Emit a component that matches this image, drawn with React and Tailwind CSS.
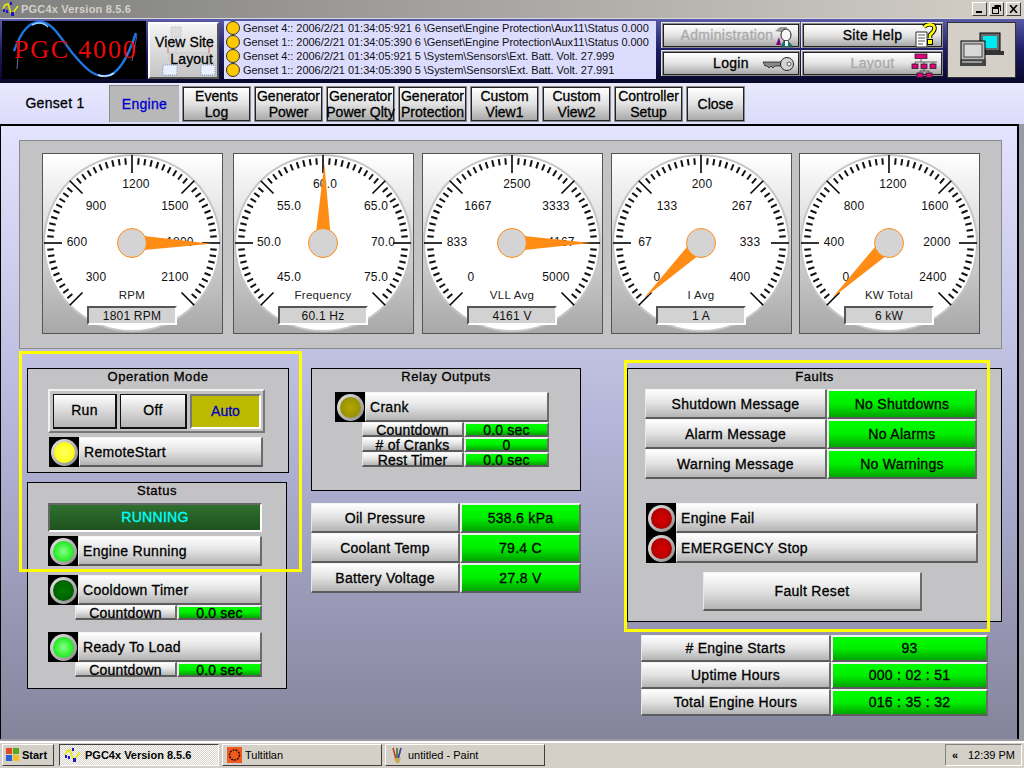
import React from "react";

const strokeTxt = "[-webkit-text-stroke:0.3px_#000]";
const raised = "bg-gradient-to-b from-white via-[#e2e2e2] to-[#b4b4b4] border-t border-l border-t-[#f4f4f4] border-l-[#e8e8e8] border-r-2 border-b-2 border-r-[#6a6a6a] border-b-[#5c5c5c]";
const greenCell = "bg-gradient-to-b from-[#00ff00] via-[#00ee00] to-[#00a400] border-2 border-t-[#f0f0f0] border-l-[#f0f0f0] border-r-[#6a6a6a] border-b-[#5c5c5c]";

function Row({ label, value, labelW, valueW, h, size }) {
  const text = size === "small" ? "text-[14px] leading-none tracking-[0.2px]" : "text-[14px] tracking-[0.3px]";
  return (
    <div className={`flex text-black ${strokeTxt} ${text}`} style={{ height: h }}>
      <div className={`${raised} flex items-center justify-center shrink-0 pt-px`} style={{ width: labelW }}>{label}</div>
      <div className={`${greenCell} flex items-center justify-center shrink-0`} style={{ width: valueW }}>{value}</div>
    </div>
  );
}

const ledColors = {
  yellow: "bg-[radial-gradient(circle,#ffff66_0%,#ffff22_55%,#e8e800_100%)]",
  green: "bg-[radial-gradient(circle,#88ff88_0%,#33f033_55%,#10c010_100%)]",
  dark: "bg-[radial-gradient(circle,#007a00_0%,#006000_70%,#005000_100%)]",
  olive: "bg-[radial-gradient(circle,#b0a800_0%,#989000_70%,#807800_100%)]",
  red: "bg-[radial-gradient(circle,#d80000_0%,#b80000_60%,#880000_100%)]",
};

function Led({ color }) {
  return (
    <div className="w-[30px] h-full bg-black flex items-center justify-center shrink-0">
      <div className="w-[27px] h-[27px] rounded-full bg-gradient-to-br from-[#e8e8e8] to-[#8a8a8a] flex items-center justify-center">
        <div className={`w-[21px] h-[21px] rounded-full ${ledColors[color]}`} />
      </div>
    </div>
  );
}

function Indicator({ color, label, w = 214, h = 30 }) {
  return (
    <div className="flex" style={{ width: w, height: h }}>
      <Led color={color} />
      <div className={`${raised} flex-1 flex items-center pl-[4px] pt-px text-[14px] tracking-[0.3px] text-black ${strokeTxt}`}>{label}</div>
    </div>
  );
}

function PanelTitle({ children }) {
  return <div className={`h-[20px] pt-px text-center text-[13px] leading-[14px] tracking-[0.55px] text-black ${strokeTxt}`}>{children}</div>;
}

function Gauge({ labels, xs, name, readout, value }) {
  const c = 90;
  const ys = [34, -1, -37, -59, -37, -1, 34];
  const pt = (deg, r) => {
    const a = (deg * Math.PI) / 180;
    return [c + r * Math.cos(a), c - r * Math.sin(a)];
  };
  const minor = [];
  for (let i = 0; i < 60; i++) {
    if (i % 10 === 0) continue;
    const d = 225 - i * 4.5;
    const [x1, y1] = pt(d, 78.5);
    const [x2, y2] = pt(d, 85);
    minor.push(<line key={i} x1={x1} y1={y1} x2={x2} y2={y2} stroke="#111" strokeWidth="2" />);
  }
  const major = [0, 1, 2, 3, 4, 5, 6].map((i) => {
    const d = 225 - i * 45;
    const [x1, y1] = pt(d, 70);
    const [x2, y2] = pt(d, 88);
    return <line key={i} x1={x1} y1={y1} x2={x2} y2={y2} stroke="#000" strokeWidth="1.6" />;
  });
  const [tx, ty] = pt(value, 79);
  const [b1x, b1y] = pt(value + 30, 14);
  const [b2x, b2y] = pt(value - 30, 14);
  return (
    <div className="relative w-[181px] h-[181px] shrink-0 border border-[#555] bg-gradient-to-b from-white via-[#d6d6d6] to-[#a8a8a8]">
      <svg width="181" height="181" className="absolute left-[-1px] top-[-1px]" style={{ fontFamily: "'Liberation Sans',sans-serif" }}>
        <circle cx={c} cy={c} r="88" fill="#fff" stroke="#c6c6c6" strokeWidth="2" />
        {minor}
        {major}
        {labels.map((l, i) => (
          <text key={i} x={c + xs[i]} y={c + ys[i]} textAnchor="middle" dominantBaseline="central" fontSize="12" fill="#111" letterSpacing="0.2">{l}</text>
        ))}
        <text x={c} y={142} textAnchor="middle" dominantBaseline="central" fontSize="11.5" fill="#222" letterSpacing="0.3">{name}</text>
        <polygon points={`${tx},${ty} ${b1x},${b1y} ${b2x},${b2y}`} fill="#ff8c14" />
        <circle cx={c} cy={c} r="14.5" fill="#d4d4d4" stroke="#ff8c14" strokeWidth="1" />
      </svg>
      <div className="absolute left-[44px] top-[152px] w-[90px] h-[19px] bg-[#d2d2d2] border-2 border-t-[#555] border-l-[#555] border-r-white border-b-white flex items-center justify-center text-[12px] text-[#111] tracking-[0.2px]">
        {readout}
      </div>
    </div>
  );
}

function HeadBtn({ label, disabled, icon, pr, w }) {
  return (
    <div className="p-[1px] bg-[#8c8c8c] border-t border-l border-[#e4e4e4] h-[26px]" style={{ width: w }}>
      <div className="relative h-full border border-[#222] bg-gradient-to-b from-white via-[#e2e2e2] to-[#a9a9a9] flex items-center justify-center">
        <span className={`text-[14px] tracking-[0.3px] ${disabled ? "text-[#a9a9a9] [-webkit-text-stroke:0.3px_#a9a9a9]" : `text-black ${strokeTxt}`}`} style={{ marginRight: pr }}>{label}</span>
        {icon}
      </div>
    </div>
  );
}

function TabBtn({ lines, w }) {
  return (
    <div className="p-[1px] h-[37px] bg-[#8c8c8c] border-t border-l border-[#ececec] shrink-0" style={{ width: w }}>
      <div className={`h-full border border-[#222] bg-gradient-to-b from-white via-[#e2e2e2] to-[#a9a9a9] flex flex-col items-center justify-center text-[14px] leading-[16px] tracking-[0px] text-black whitespace-nowrap ${strokeTxt}`}>
        {lines.map((l) => <div key={l}>{l}</div>)}
      </div>
    </div>
  );
}

const logLines = [
  "Genset 4:: 2006/2/21 01:34:05:921 6 \\Genset\\Engine Protection\\Aux11\\Status 0.000",
  "Genset 1:: 2006/2/21 01:34:05:390 6 \\Genset\\Engine Protection\\Aux11\\Status 0.000",
  "Genset 4:: 2006/2/21 01:34:05:921 5 \\System\\Sensors\\Ext. Batt. Volt. 27.999",
  "Genset 1:: 2006/2/21 01:34:05:390 5 \\System\\Sensors\\Ext. Batt. Volt. 27.991",
];

function AppIcon() {
  return (
    <svg width="18" height="16" viewBox="0 0 18 16" fill="none">
      <path d="M1 8 L3 4 L6 3 L8 9 L10 14 L13 9 L16 5" stroke="#e8e800" strokeWidth="1.6" />
      <rect x="1" y="8" width="2" height="3" fill="#1818c8" />
      <rect x="4" y="9" width="2" height="3" fill="#1818c8" />
      <rect x="9" y="11" width="3" height="4" fill="#1818c8" />
      <rect x="8" y="1" width="2" height="3" fill="#1818c8" />
    </svg>
  );
}

function Logo() {
  return (
    <div className="w-[144px] h-[58px] bg-black shrink-0">
      <svg width="144" height="58" viewBox="0 0 144 58">
        <path d="M12 30 C20 8 28 1 38 1 C52 1 60 20 72 34 C84 48 92 56 104 55 C118 54 128 30 134 12" stroke="#1c78e0" strokeWidth="2.4" fill="none" />
        <path d="M30 4 C36 1 42 2 46 6" stroke="#9cd0ff" strokeWidth="1.4" fill="none" />
        <path d="M96 54 C102 56 108 55 112 52" stroke="#d8ecff" strokeWidth="1.4" fill="none" />
        <path d="M15 48 L17 20" stroke="#6a6ab0" strokeWidth="1" />
        <path d="M130 40 L135 14" stroke="#5a5a90" strokeWidth="1" />
        <text x="12" y="37" fontSize="26" fill="#ee0808" letterSpacing="1.8" style={{ fontFamily: "'Liberation Serif',serif" }}>PGC 4000</text>
      </svg>
    </div>
  );
}

function SiteFaint() {
  return (
    <svg width="66" height="54" viewBox="0 0 66 54" className="absolute left-[1px] top-[1px]" fill="none">
      <rect x="20" y="2" width="10" height="10" fill="#ddd" stroke="#bbb" strokeDasharray="1 1" />
      <path d="M25 12 V26 M18 28 H58 M18 28 V38 M58 28 V38" stroke="#c8c8c8" />
      <rect x="12" y="40" width="14" height="10" fill="#e8f0ff" stroke="#8898c8" strokeDasharray="1 1" />
      <rect x="50" y="40" width="14" height="10" fill="#e8f0ff" stroke="#8898c8" strokeDasharray="1 1" />
      <path d="M17 28 V22 M58 28 V22" stroke="#cc6666" />
    </svg>
  );
}

function AdminIcon() {
  return (
    <svg width="22" height="24" viewBox="0 0 22 24" className="absolute right-[3px] top-0" fill="none">
      <path d="M2 6 L7 2 H14 L12 8 Z" fill="#9a9a9a" />
      <ellipse cx="13" cy="10" rx="5" ry="6" fill="#f6f6f6" stroke="#222" />
      <path d="M6 12 L3 20 H8 Z" fill="#800080" />
      <path d="M8 22 L11 16 H15 L20 22 Z" fill="#0a7a70" stroke="#222" strokeWidth="0.5" />
      <path d="M12 16 H15 V21 H12 Z" fill="#fff" />
    </svg>
  );
}

function HelpIcon() {
  return (
    <svg width="24" height="26" viewBox="0 0 24 26" className="absolute right-[3px] top-[-2px]" fill="none">
      <path d="M2 9 H13 V24 H2 Z" fill="#fff" stroke="#333" />
      <path d="M4 12 H11 M4 15 H11 M4 18 H11 M4 21 H9" stroke="#555" />
      <path d="M10 4 Q14 0 19 2 Q22 5 19 9 L16 12 V15" stroke="#000" strokeWidth="4.5" />
      <path d="M10 4 Q14 0 19 2 Q22 5 19 9 L16 12 V15" stroke="#ffff00" strokeWidth="2.6" />
      <rect x="13.5" y="16.5" width="5" height="5" fill="#ffff00" stroke="#000" />
    </svg>
  );
}

function KeyIcon() {
  return (
    <svg width="32" height="16" viewBox="0 0 32 16" className="absolute right-[4px] top-[3px]" fill="none">
      <path d="M1 6 H20 V10 H13 L11 12 L9 10 L7 12 L5 10 H3 Z" fill="#888" stroke="#222" strokeWidth="0.8" />
      <circle cx="25" cy="8" r="6.5" fill="#d4d4d4" stroke="#222" />
      <circle cx="27" cy="8" r="2" fill="#fff" stroke="#333" strokeWidth="0.8" />
    </svg>
  );
}

function NetIcon() {
  const boxes = [[4, 1, 12], [1, 11, 6], [10, 11, 6], [19, 11, 6], [6, 20, 6], [15, 20, 6]];
  return (
    <svg width="30" height="26" viewBox="0 0 30 26" className="absolute right-0 top-0" fill="none">
      <path d="M10 6 V9 M4 9 H26 M4 9 V11 M13 9 V11 M22 9 V11 M13 16 V18 M9 18 H18 M9 18 V20 M18 18 V20" stroke="#444" strokeWidth="0.8" />
      {boxes.map(([x, y, w], i) => (
        <rect key={i} x={x} y={y} width={w} height="4.5" fill="#e0007a" stroke="#222" strokeWidth="0.8" />
      ))}
    </svg>
  );
}

function ComputersIcon() {
  return (
    <svg width="44" height="36" viewBox="0 0 44 36" fill="none">
      <rect x="20" y="1" width="20" height="18" fill="#6a6a6a" stroke="#000" />
      <rect x="23" y="4" width="14" height="12" fill="#00e8f0" />
      <rect x="22" y="19" width="22" height="4" fill="#333" />
      <rect x="1" y="9" width="24" height="19" fill="#b8b8b8" stroke="#000" />
      <rect x="4" y="12" width="18" height="13" fill="#d8d8d8" stroke="#444" />
      <rect x="0" y="28" width="26" height="6" fill="#444" />
      <rect x="2" y="29" width="20" height="2" fill="#999" />
    </svg>
  );
}

function StartIcon() {
  return (
    <svg width="14" height="14" viewBox="0 0 14 14">
      <rect x="0" y="0" width="6" height="6" fill="#e04820" />
      <rect x="7" y="0" width="6" height="6" fill="#58a818" />
      <rect x="0" y="7" width="6" height="6" fill="#2860d8" />
      <rect x="7" y="7" width="6" height="6" fill="#f0c020" />
    </svg>
  );
}

function TitleBtn({ children }) {
  return (
    <div className="w-[15px] h-[14px] bg-[#d4d0c8] border border-t-white border-l-white border-r-[#404040] border-b-[#404040] flex items-center justify-center">
      {children}
    </div>
  );
}

function TaskBtn({ w, icon, label, active }) {
  return (
    <div
      className={`h-[22px] flex items-center gap-[3px] pl-[4px] shrink-0 text-[11px] text-black ${active ? "font-bold border border-t-[#404040] border-l-[#404040] border-r-white border-b-white bg-[repeating-conic-gradient(#fff_0_25%,#d4d0c8_0_50%)] bg-[length:2px_2px]" : "border border-t-white border-l-white border-r-[#404040] border-b-[#404040] bg-[#d4d0c8]"}`}
      style={{ width: w }}
    >
      {icon}
      <span>{label}</span>
    </div>
  );
}

export default function App() {
  return (
    <div className="w-[1024px] h-[768px] overflow-hidden flex flex-col bg-[#9a9aa4] font-['Liberation_Sans',Arial,sans-serif]">
      {/* Title bar */}
      <div className="h-[18px] shrink-0 flex items-center pl-[2px] pr-[3px] bg-gradient-to-r from-[#808080] to-[#d4d0c8]">
        <AppIcon />
        <span className="ml-[1px] text-[11px] font-bold text-[#d4d0c8] tracking-[0.2px]">PGC4x Version 8.5.6</span>
        <div className="ml-auto flex">
          <TitleBtn><span className="w-[6px] h-[2px] bg-black mt-[6px] mr-[2px]" /></TitleBtn>
          <div className="ml-[2px]"><TitleBtn>
            <svg width="9" height="9" viewBox="0 0 9 9" fill="none"><path d="M2.5 0.5 H8.5 V6 M2.5 1.5 H8.5" stroke="#000" /><rect x="0.5" y="2.5" width="6" height="6" fill="#d4d0c8" stroke="#000" /><path d="M0.5 3.5 H6.5" stroke="#000" /></svg>
          </TitleBtn></div>
          <div className="ml-[2px]"><TitleBtn>
            <svg width="9" height="8" viewBox="0 0 9 8"><path d="M1 0 L8 8 M8 0 L1 8" stroke="#000" strokeWidth="1.6" /></svg>
          </TitleBtn></div>
        </div>
      </div>

      {/* Header */}
      <div className="h-[65px] shrink-0 border-t border-t-[#d8d8d8] bg-gradient-to-b from-[#5a5aa8] via-[#1c1c64] to-[#08082a] flex items-start pt-[2px] pl-[2px]">
        <Logo />
        <div className="relative ml-[2px] mt-[1px] w-[71px] h-[57px] border-2 border-t-white border-l-white border-r-[#555] border-b-[#555] bg-gradient-to-b from-[#f4f4f4] to-[#c4c4c4] text-[14px] leading-[16px] tracking-[0.1px] text-black flex flex-col items-end justify-center pr-[3px] shrink-0">
          <SiteFaint />
          <span className={`relative z-10 ${strokeTxt}`}>View Site</span>
          <span className={`relative z-10 mt-[1px] mr-[1px] ${strokeTxt}`}>Layout</span>
        </div>
        <div className="ml-[5px] w-[432px] h-[58px] bg-[#dcdcff] flex flex-col shrink-0">
          {logLines.map((l, i) => (
            <div key={i} className="h-[14px] flex items-center pl-[2px] shrink-0">
              <span className="w-[14px] h-[14px] rounded-full bg-[#ffc800] border border-[#333] shrink-0" />
              <span className="ml-[3px] text-[11px] tracking-[-0.04px] text-[#111] whitespace-nowrap">{l}</span>
            </div>
          ))}
        </div>
        <div className="ml-[5px] mt-[1px] w-[282px] grid grid-cols-[140px_142px] gap-y-[2px] shrink-0">
          <HeadBtn label="Administration" disabled w={139} pr={8} icon={<AdminIcon />} />
          <HeadBtn label="Site Help" w={142} pr={0} icon={<HelpIcon />} />
          <HeadBtn label="Login" w={139} pr={0} icon={<KeyIcon />} />
          <HeadBtn label="Layout" disabled w={142} pr={0} icon={<NetIcon />} />
        </div>
        <div className="ml-[4px] mt-[1px] w-[69px] h-[56px] bg-[#d4d0c8] border border-[#333] flex items-center justify-center shrink-0">
          <ComputersIcon />
        </div>
      </div>

      {/* Tabs */}
      <div className="h-[41px] shrink-0 bg-gradient-to-b from-[#e8e8ff] to-[#dcdcfa] flex items-start pl-px pt-[2px]">
        <div className={`w-[108px] h-[37px] flex items-center justify-center text-[14px] tracking-[0.3px] text-black ${strokeTxt}`}>Genset 1</div>
        <div className="w-[70px] h-[37px] bg-[#b8b8b8] border-t border-l border-[#8a8a8a] flex items-center justify-center text-[14px] tracking-[0.3px] text-[#0000d0] [-webkit-text-stroke:0.3px_#0000d0] shrink-0">Engine</div>
        <div className="flex gap-[2px] ml-[2px]">
          <TabBtn lines={["Events", "Log"]} w={70} />
          <TabBtn lines={["Generator", "Power"]} w={70} />
          <TabBtn lines={["Generator", "Power Qlty"]} w={70} />
          <TabBtn lines={["Generator", "Protection"]} w={70} />
          <TabBtn lines={["Custom", "View1"]} w={70} />
          <TabBtn lines={["Custom", "View2"]} w={70} />
          <TabBtn lines={["Controller", "Setup"]} w={70} />
          <TabBtn lines={["Close"]} w={60} />
        </div>
      </div>

      {/* Main */}
      <div className="relative h-[615px] w-[1019px] shrink-0 border-t-2 border-l border-r-2 border-black bg-gradient-to-b from-[#e4e4ff] via-[#b4b4d8] to-[#84849c] pt-[14px]">
        <div className="ml-[18px] w-[983px] h-[209px] bg-[#c3c2c4] border border-[#8a8a8a] flex items-start pl-[22px] pt-[12px]">
          <Gauge labels={["300","600","900","1200","1500","1800","2100"]} xs={[-36,-55,-36,4,43,48,43]} name="RPM" readout="1801 RPM" value={-0.5} />
          <div className="w-[10px] shrink-0" />
          <Gauge labels={["45.0","50.0","55.0","60.0","65.0","70.0","75.0"]} xs={[-34,-54,-34,2,53,60,53]} name="Frequency" readout="60.1 Hz" value={89} />
          <div className="w-[8px] shrink-0" />
          <Gauge labels={["0","833","1667","2500","3333","4167","5000"]} xs={[-41,-55,-34,5,44,49,44]} name="VLL Avg" readout="4161 V" value={0} />
          <div className="w-[8px] shrink-0" />
          <Gauge labels={["0","67","133","200","267","333","400"]} xs={[-44,-56,-34,1,41,49,39]} name="I Avg" readout="1 A" value={224} />
          <div className="w-[7px] shrink-0" />
          <Gauge labels={["0","400","800","1200","1600","2000","2400"]} xs={[-43,-55,-35,4,46,48,44]} name="KW Total" readout="6 kW" value={224} />
        </div>

        <div className="flex items-start mt-[19px] ml-[26px]">
          {/* Left column */}
          <div className="w-[262px] flex flex-col gap-[9px] shrink-0">
            <div className="h-[105px] bg-[#c3c2c4] border border-black">
              <PanelTitle>Operation Mode</PanelTitle>
              <div className="ml-[20px] w-[217px] h-[44px] bg-[#c3c2c4] border-2 border-t-[#f0f0f0] border-l-[#f0f0f0] border-r-[#777] border-b-[#777] flex items-center gap-[3px] pl-[3px]">
                {["Run", "Off"].map((t, i) => (
                  <div key={t} className={`h-[35px] border-t border-l border-r-2 border-b-2 border-[#111] bg-gradient-to-b from-white to-[#b4b4b4] flex items-center justify-center text-[14px] tracking-[0.3px] text-black ${strokeTxt} ${i === 0 ? "w-[64px]" : "w-[67px]"}`}>{t}</div>
                ))}
                <div className="w-[71px] h-[35px] bg-[#bdb900] border-2 border-t-[#777] border-l-[#777] border-r-white border-b-white flex items-center justify-center text-[14px] text-[#0000c8] [-webkit-text-stroke:0.3px_#0000c8]">Auto</div>
              </div>
              <div className="ml-[21px] mt-[4px]"><Indicator color="yellow" label="RemoteStart" /></div>
            </div>
            <div className="w-[260px] h-[207px] bg-[#c3c2c4] border border-black">
              <PanelTitle>Status</PanelTitle>
              <div className="ml-[20px] w-[214px] h-[29px] bg-gradient-to-b from-[#2e702e] to-[#1e521e] border-2 border-t-[#666] border-l-[#666] border-r-white border-b-white flex items-center justify-center text-[14px] tracking-[0.3px] text-[#00ffff] [-webkit-text-stroke:0.3px_#00ffff]">RUNNING</div>
              <div className="ml-[20px] mt-[4px]"><Indicator color="green" label="Engine Running" /></div>
              <div className="ml-[20px] mt-[9px]"><Indicator color="dark" label="Cooldown Timer" /></div>
              <div className="ml-[47px]"><Row label="Countdown" value="0.0 sec" labelW={102} valueW={85} h={15} size="small" /></div>
              <div className="ml-[20px] mt-[12px]"><Indicator color="green" label="Ready To Load" /></div>
              <div className="ml-[47px]"><Row label="Countdown" value="0.0 sec" labelW={102} valueW={85} h={15} size="small" /></div>
            </div>
          </div>

          {/* Middle column */}
          <div className="ml-[22px] w-[270px] shrink-0">
            <div className="h-[123px] bg-[#c3c2c4] border border-black">
              <PanelTitle>Relay Outputs</PanelTitle>
              <div className="ml-[23px] mt-[3px]"><Indicator color="olive" label="Crank" /></div>
              <div className="ml-[50px]">
                <Row label="Countdown" value="0.0 sec" labelW={102} valueW={85} h={15} size="small" />
                <Row label="# of Cranks" value="0" labelW={102} valueW={85} h={15} size="small" />
                <Row label="Rest Timer" value="0.0 sec" labelW={102} valueW={85} h={15} size="small" />
              </div>
            </div>
            <div className="mt-[12px]">
              <Row label="Oil Pressure" value="538.6 kPa" labelW={149} valueW={121} h={30} />
              <Row label="Coolant Temp" value="79.4 C" labelW={149} valueW={121} h={30} />
              <Row label="Battery Voltage" value="27.8 V" labelW={149} valueW={121} h={30} />
            </div>
          </div>

          {/* Right column */}
          <div className="ml-[46px] w-[375px] shrink-0">
            <div className="h-[254px] bg-[#c3c2c4] border border-black">
              <PanelTitle>Faults</PanelTitle>
              <div className="ml-[17px]">
                <Row label="Shutdown Message" value="No Shutdowns" labelW={182} valueW={150} h={30} />
                <Row label="Alarm Message" value="No Alarms" labelW={182} valueW={150} h={30} />
                <Row label="Warning Message" value="No Warnings" labelW={182} valueW={150} h={30} />
              </div>
              <div className="ml-[18px] mt-[24px]">
                <Indicator color="red" label="Engine Fail" w={332} />
                <Indicator color="red" label="EMERGENCY Stop" w={332} />
              </div>
              <div className={`${raised} ml-[75px] mt-[9px] w-[219px] h-[39px] flex items-center justify-center text-[14px] tracking-[0.3px] text-black ${strokeTxt}`}>Fault Reset</div>
            </div>
            <div className="ml-[14px] mt-[13px]">
              <Row label="# Engine Starts" value="93" labelW={190} valueW={157} h={27} />
              <Row label="Uptime Hours" value="000 : 02 : 51" labelW={190} valueW={157} h={27} />
              <Row label="Total Engine Hours" value="016 : 35 : 32" labelW={190} valueW={157} h={27} />
            </div>
          </div>
        </div>

        {/* Yellow highlights */}
        <div className="absolute left-[18px] top-[225px] w-[283px] h-[221px] border-[3px] border-[#ffff00] pointer-events-none" />
        <div className="absolute left-[623px] top-[234px] w-[366px] h-[272px] border-[3px] border-[#ffff00] pointer-events-none" />
      </div>

      {/* Taskbar */}
      <div className="mt-[2px] flex-1 bg-[#d4d0c8] border-t-2 border-t-white flex items-center pl-[2px] pr-[2px] pb-[1px]">
        <div className="w-[52px] h-[22px] border border-t-white border-l-white border-r-[#404040] border-b-[#404040] flex items-center gap-[2px] pl-[3px] text-[11px] font-bold text-black shrink-0">
          <StartIcon />Start
        </div>
        <div className="flex gap-[3px] ml-[5px]">
          <TaskBtn w={160} active label="PGC4x Version 8.5.6" icon={<AppIcon />} />
          <TaskBtn w={160} label="Tultitlan" icon={
            <svg width="15" height="16" viewBox="0 0 15 16"><rect width="15" height="16" fill="#f05a20" /><circle cx="7.5" cy="8" r="5" fill="none" stroke="#301000" strokeWidth="1.5" strokeDasharray="2 1" /></svg>
          } />
          <TaskBtn w={160} label="untitled - Paint" icon={
            <svg width="15" height="17" viewBox="0 0 15 17" fill="none"><path d="M3 1 L6 12 M7 1 V12 M11 1 L8 12" stroke="#c83030" strokeWidth="1.5" /><path d="M7 1 V12" stroke="#30a030" strokeWidth="1.5" /><path d="M11 1 L8 12" stroke="#3050c0" strokeWidth="1.5" /><path d="M4 11 H11 L9 16 H6 Z" fill="#c8a860" /></svg>
          } />
        </div>
        <div className="ml-auto w-[77px] h-[22px] border border-t-[#808080] border-l-[#808080] border-r-white border-b-white flex items-center justify-between px-[6px] text-[11px] text-black shrink-0">
          <span className="font-bold">«</span><span>12:39 PM</span>
        </div>
      </div>
    </div>
  );
}
